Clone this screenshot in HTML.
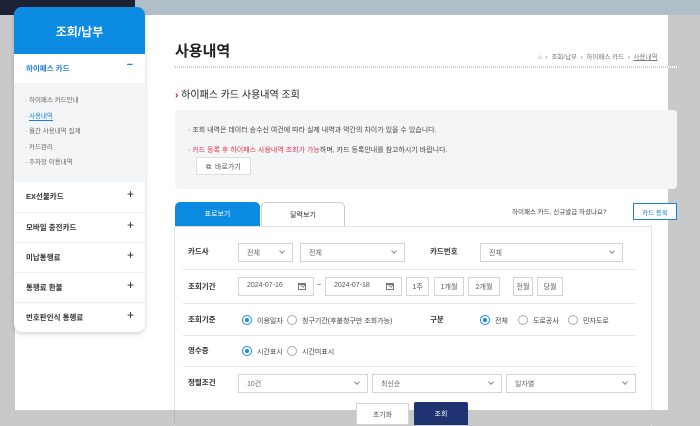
<!DOCTYPE html>
<html><head><meta charset="utf-8"><style>
*{margin:0;padding:0;box-sizing:border-box}
body{width:700px;height:425px;overflow:hidden;background:#c9c9c9;font-family:"Liberation Sans","Noto Sans CJK KR",sans-serif;position:relative;color:#333}
.a{position:absolute;white-space:nowrap}
.t{font-size:7px;color:#444}
.sel{position:absolute;height:19px;border:1px solid #d4d4d4;background:#fff;font-size:7px;color:#666;padding:4px 0 0 8px}
.sel:after{content:"";position:absolute;right:8px;top:5px;width:3px;height:3px;border-right:1px solid #888;border-bottom:1px solid #888;transform:rotate(45deg)}
.btn{position:absolute;height:19px;border:1px solid #d4d4d4;background:#fff;font-size:7px;color:#555;text-align:center;padding-top:4px}
.rad{position:absolute;width:10px;height:10px;border:1px solid #aaa;border-radius:50%;background:#fff}
.rad.on{border-color:#1a8ae6}
.rad.on:after{content:"";position:absolute;left:2px;top:2px;width:4px;height:4px;border-radius:50%;background:#1a8ae6}
.lbl{position:absolute;font-size:7.5px;font-weight:bold;color:#333}
.hl{position:absolute;left:183px;width:453px;height:1px;background:#e6e6e6}
.mi{position:absolute;left:14px;width:131px;height:30px;border-top:1px solid #eee;font-size:7.5px;font-weight:bold;color:#333;padding:9px 0 0 12px}
.mi b{position:absolute;right:11px;top:5px;font-size:12px;color:#223;font-weight:normal}
.cal{position:absolute;right:7px;top:5px;width:8px;height:7px;border:1px solid #777;border-top-width:2px}
</style></head><body>
<div class="a" style="left:0;top:0;width:700px;height:15px;background:#b0bec8"></div>
<div class="a" style="left:0;top:0;width:135px;height:15px;background:#1c2236;border-bottom-right-radius:10px"></div>
<div class="a" style="left:15px;top:15px;width:653px;height:395px;background:#fff"></div>

<!-- sidebar -->
<div class="a" style="left:14px;top:7px;width:131px;height:325px;background:#fff;border-radius:8px;box-shadow:0 2px 5px rgba(0,0,0,.18);overflow:hidden">
 <div style="height:47px;background:#0b8be2;color:#fff;font-size:12px;font-weight:bold;text-align:center;padding-top:16px">조회/납부</div>
 <div style="height:29px;font-size:7.5px;font-weight:bold;color:#1a7fd6;padding:9px 0 0 12px;position:relative">하이패스 카드<span style="position:absolute;right:12px;top:5px;font-size:11px;color:#1a7fd6">−</span></div>
 <div style="height:99px;background:#f4f5f7;font-size:6.5px;color:#666;padding:10px 0 0 11px;line-height:15.5px">
  <div>· 하이패스 카드안내</div>
  <div style="color:#1a7fd6">· <span style="border-bottom:1px solid #1a7fd6">사용내역</span></div>
  <div>· 월간 사용내역 집계</div>
  <div>· 카드관리</div>
  <div>· 주차장 이용내역</div>
 </div>
</div>
<div class="mi" style="top:182px;border:none">EX선불카드<b>+</b></div>
<div class="mi" style="top:212px">모바일 충전카드<b>+</b></div>
<div class="mi" style="top:242px">미납통행료<b>+</b></div>
<div class="mi" style="top:272px">통행료 환불<b>+</b></div>
<div class="mi" style="top:302px">번호판인식 통행료<b>+</b></div>

<!-- main -->
<div class="a" style="left:175px;top:40px;font-size:15px;font-weight:bold;color:#222">사용내역</div>
<div class="a t" style="left:538px;top:51px;font-size:6.5px;color:#777">⌂ &nbsp;›&nbsp; 조회/납부 &nbsp;›&nbsp; 하이패스 카드 &nbsp;›&nbsp; <u>사용내역</u></div>
<div class="a" style="left:175px;top:66px;width:502px;height:2px;background:repeating-linear-gradient(90deg,#ccc 0 1px,#fff 1px 2px)"></div>
<div class="a" style="left:175px;top:86px;font-size:10px;color:#222"><span style="color:#d0102c;font-weight:bold">›</span> 하이패스 카드 사용내역 조회</div>
<div class="a" style="left:175px;top:110px;width:502px;height:79px;background:#f4f5f7;border-radius:4px"></div>
<div class="a t" style="left:188px;top:125px">· 조회 내역은 데이터 송수신 여건에 따라 실제 내역과 약간의 차이가 있을 수 있습니다.</div>
<div class="a t" style="left:188px;top:145px">· <span style="color:#e8344e">카드 등록 후 하이패스 사용내역 조회가 가능</span>하며, 카드 등록안내를 참고하시기 바랍니다.</div>
<div class="btn" style="left:196px;top:157px;width:55px;height:18px;border-color:#ddd">⧉ &nbsp;바로가기</div>

<div class="a" style="left:175px;top:202px;width:85px;height:25px;background:#0b8be2;border-radius:5px 5px 0 0;color:#fff;font-size:7px;text-align:center;padding-top:7px">표로보기</div>
<div class="a" style="left:261px;top:202px;width:84px;height:25px;background:#fff;border:1px solid #ccc;border-bottom:none;border-radius:5px 5px 0 0;font-size:7px;text-align:center;padding-top:7px">달력보기</div>
<div class="a t" style="left:512px;top:206px;font-size:6.5px">하이패스 카드, 신규발급 하셨나요?</div>
<div class="btn" style="left:633px;top:203px;width:44px;height:17px;border-color:#1a7fd6;color:#1a7fd6;padding-top:3px;font-size:6.5px">카드 등록</div>

<div class="a" style="left:174px;top:226px;width:478px;height:200px;border:1px solid #e0e0e0;border-bottom:none"></div>
<div class="hl" style="top:269px"></div><div class="hl" style="top:303px"></div><div class="hl" style="top:335px"></div><div class="hl" style="top:366px"></div>

<div class="lbl" style="left:188px;top:246px">카드사</div>
<div class="sel" style="left:238px;top:243px;width:55px">전체</div>
<div class="sel" style="left:300px;top:243px;width:105px">전체</div>
<div class="lbl" style="left:430px;top:246px">카드번호</div>
<div class="sel" style="left:480px;top:243px;width:143px">전체</div>

<div class="lbl" style="left:188px;top:281px">조회기간</div>
<div class="sel" style="left:238px;top:277px;width:76px;color:#555">2024-07-16<span class="cal"></span></div>
<div class="a t" style="left:317px;top:282px">~</div>
<div class="sel" style="left:325px;top:277px;width:77px;color:#555">2024-07-18<span class="cal"></span></div>
<div class="btn" style="left:406px;top:277px;width:23px">1주</div>
<div class="btn" style="left:434px;top:277px;width:30px">1개월</div>
<div class="btn" style="left:468px;top:277px;width:32px">2개월</div>
<div class="btn" style="left:513px;top:277px;width:20px">전월</div>
<div class="btn" style="left:537px;top:277px;width:26px">당월</div>

<div class="lbl" style="left:188px;top:314px">조회기준</div>
<div class="rad on" style="left:242px;top:315px"></div><div class="a t" style="left:257px;top:316px">이용일자</div>
<div class="rad" style="left:287px;top:315px"></div><div class="a t" style="left:302px;top:316px">청구기간(후불청구만 조회가능)</div>
<div class="lbl" style="left:430px;top:314px">구분</div>
<div class="rad on" style="left:480px;top:315px"></div><div class="a t" style="left:495px;top:316px">전체</div>
<div class="rad" style="left:518px;top:315px"></div><div class="a t" style="left:533px;top:316px">도로공사</div>
<div class="rad" style="left:568px;top:315px"></div><div class="a t" style="left:583px;top:316px">민자도로</div>

<div class="lbl" style="left:188px;top:345px">영수증</div>
<div class="rad on" style="left:242px;top:346px"></div><div class="a t" style="left:257px;top:347px">시간표시</div>
<div class="rad" style="left:287px;top:346px"></div><div class="a t" style="left:302px;top:347px">시간미표시</div>

<div class="lbl" style="left:188px;top:377px">정렬조건</div>
<div class="sel" style="left:238px;top:374px;width:130px">10건</div>
<div class="sel" style="left:372px;top:374px;width:130px">최신순</div>
<div class="sel" style="left:506px;top:374px;width:130px">일자별</div>

<div class="a" style="left:0;top:410px;width:700px;height:15px;background:#c9c9c9"></div>
<div class="a" style="left:174px;top:410px;width:1px;height:15px;background:#b8b8b8"></div>
<div class="btn" style="left:356px;top:403px;width:53px;height:22px;padding-top:6px">초기화</div>
<div class="a" style="left:414px;top:402px;width:54px;height:23px;background:#1e3370;border-radius:2px 2px 0 0;color:#fff;font-size:7px;text-align:center;padding-top:7px">조회</div>
</body></html>
